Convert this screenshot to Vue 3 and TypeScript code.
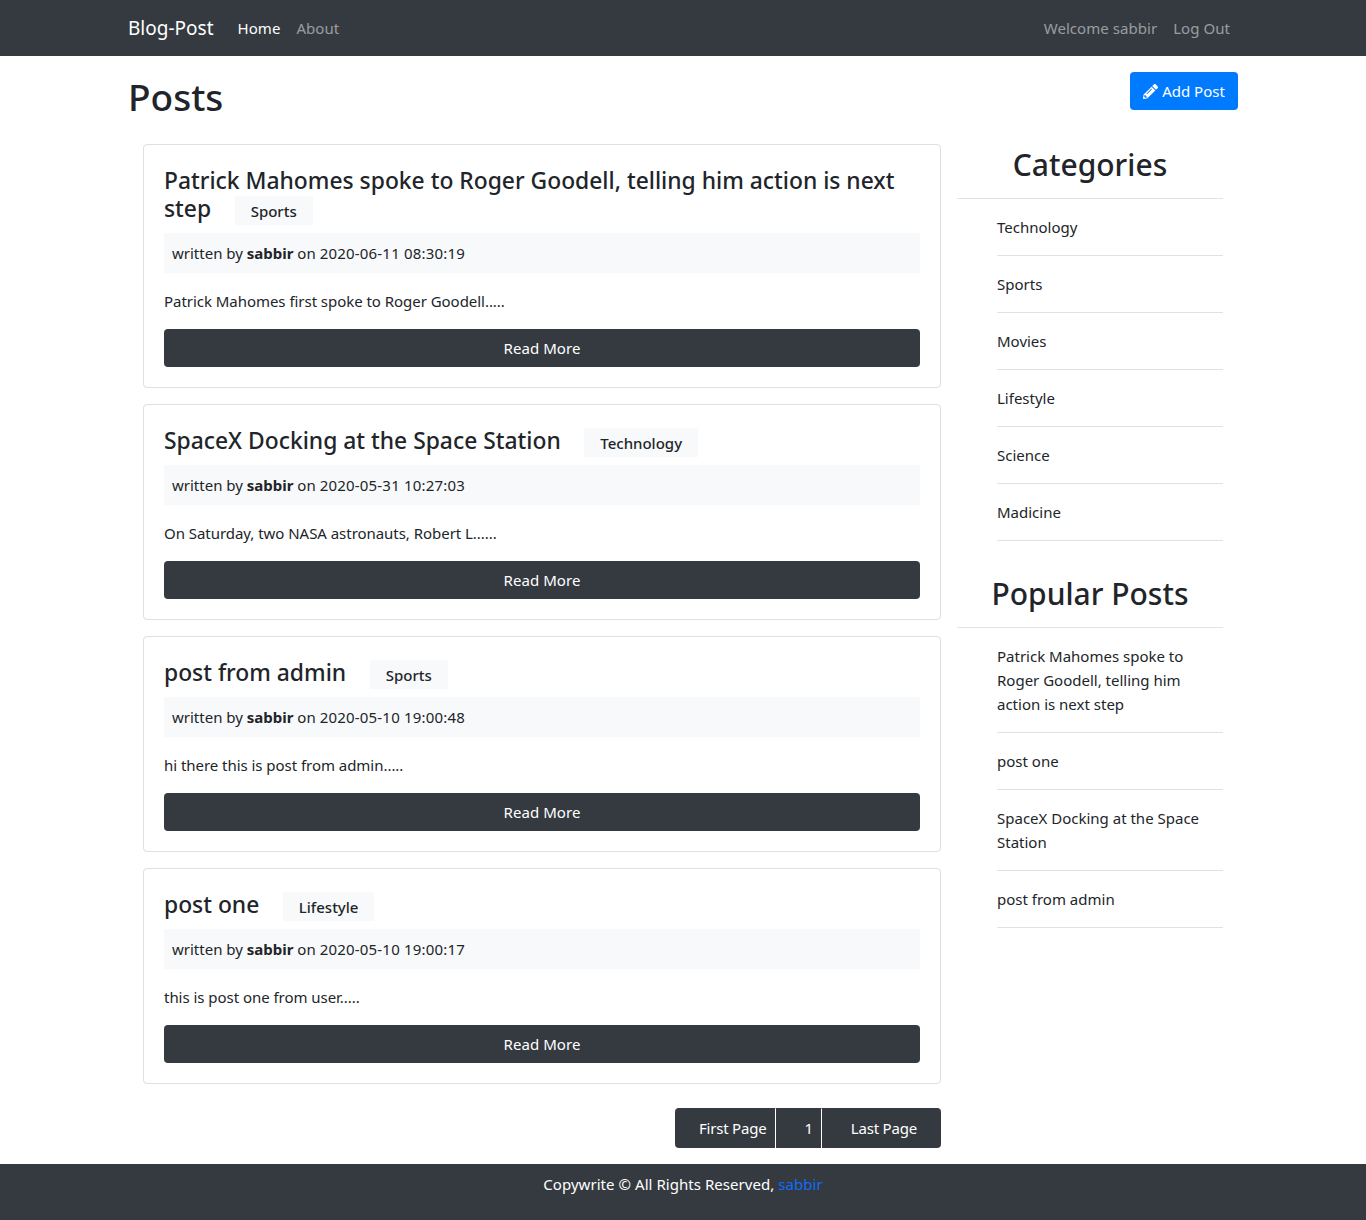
<template>
  <div class="page">
    <nav class="navbar">
      <div class="nav-inner">
        <a class="brand" href="#">Blog-Post</a>
        <a class="nav-link active" href="#">Home</a>
        <a class="nav-link" href="#">About</a>
        <span class="spacer"></span>
        <a class="nav-link" href="#">Welcome sabbir</a>
        <a class="nav-link" href="#">Log Out</a>
      </div>
    </nav>

    <div class="container">
      <div class="page-head">
        <h1>Posts</h1>
        <a class="add-btn" href="#">
          <svg class="pencil" viewBox="0 0 512 512">
            <path
              fill="currentColor"
              d="M497.9 142.1l-46.1 46.1c-4.7 4.7-12.3 4.7-17 0l-111-111c-4.7-4.7-4.7-12.3 0-17l46.1-46.1c18.7-18.7 49.1-18.7 67.9 0l60.1 60.1c18.8 18.7 18.8 49.1 0 67.9zM284.2 99.8L21.6 362.4.4 483.9c-2.9 16.4 11.4 30.6 27.8 27.8l121.5-21.3 262.6-262.6c4.7-4.7 4.7-12.3 0-17l-111-111c-4.8-4.7-12.4-4.7-17.1 0zM124.1 339.9c-5.5-5.5-5.5-14.3 0-19.8l154-154c5.5-5.5 14.3-5.5 19.8 0s5.5 14.3 0 19.8l-154 154c-5.5 5.5-14.3 5.5-19.8 0zM88 424h48v36.3l-64.5 11.3-31.1-31.1L51.7 376H88v48z"
            />
          </svg>
          Add Post
        </a>
      </div>

      <div class="content">
        <main class="posts">
          <article v-for="post in posts" :key="post.title" class="card">
            <h3 class="post-title">
              {{ post.title }}<small class="tag">{{ post.category }}</small>
            </h3>
            <div class="meta">
              written by <b>sabbir</b> on <span class="date">{{ post.date }}</span>
            </div>
            <p class="excerpt">{{ post.excerpt }}</p>
            <a class="read-more" href="#">Read More</a>
          </article>

          <div class="pagination">
            <a class="page-item first" href="#">First Page</a>
            <a class="page-item num" href="#">1</a>
            <a class="page-item last" href="#">Last Page</a>
          </div>
        </main>

        <aside class="sidebar">
          <h2 class="categories">Categories</h2>
          <hr />
          <ul>
            <li v-for="c in categories" :key="c">{{ c }}</li>
          </ul>
          <h2 class="popular">Popular Posts</h2>
          <hr />
          <ul>
            <li v-for="p in popular" :key="p">{{ p }}</li>
          </ul>
        </aside>
      </div>
    </div>

    <footer class="footer">
      Copywrite © All Rights Reserved, <a href="#">sabbir</a>
    </footer>
  </div>
</template>

<script setup lang="ts">
interface Post {
  title: string;
  category: string;
  date: string;
  excerpt: string;
}

const posts: Post[] = [
  {
    title: "Patrick Mahomes spoke to Roger Goodell, telling him action is next step",
    category: "Sports",
    date: "2020-06-11 08:30:19",
    excerpt: "Patrick Mahomes first spoke to Roger Goodell.....",
  },
  {
    title: "SpaceX Docking at the Space Station",
    category: "Technology",
    date: "2020-05-31 10:27:03",
    excerpt: "On Saturday, two NASA astronauts, Robert L......",
  },
  {
    title: "post from admin",
    category: "Sports",
    date: "2020-05-10 19:00:48",
    excerpt: "hi there this is post from admin.....",
  },
  {
    title: "post one",
    category: "Lifestyle",
    date: "2020-05-10 19:00:17",
    excerpt: "this is post one from user.....",
  },
];

const categories = ["Technology", "Sports", "Movies", "Lifestyle", "Science", "Madicine"];

const popular = [
  "Patrick Mahomes spoke to Roger Goodell, telling him action is next step",
  "post one",
  "SpaceX Docking at the Space Station",
  "post from admin",
];
</script>

<style>
body {
  margin: 0;
  background: #fff;
}
</style>

<style scoped>
.page {
  font-family: "Noto Sans", "Open Sans", sans-serif;
  font-size: 15px;
  line-height: 24px;
  color: #212529;
}

a {
  text-decoration: none;
}

.navbar {
  height: 56px;
  background: #343a40;
}

.nav-inner {
  width: 1110px;
  height: 56px;
  margin: 0 auto;
  display: flex;
  align-items: center;
}

.brand {
  font-size: 19px;
  color: #fff;
  margin-right: 16px;
}

.nav-link {
  padding: 0 8px;
  color: rgba(255, 255, 255, 0.5);
  letter-spacing: 0.05px;
}

.nav-link.active {
  color: #fff;
}

.spacer {
  flex: 1;
}

.container {
  width: 1110px;
  margin: 0 auto;
}

.page-head {
  display: flex;
  justify-content: space-between;
  align-items: flex-start;
  padding-top: 16px;
  height: 72px;
}

h1 {
  margin: 0;
  font-size: 37px;
  font-weight: 500;
  line-height: 50px;
}

.add-btn {
  display: flex;
  align-items: center;
  justify-content: center;
  gap: 4px;
  width: 108px;
  height: 38px;
  background: #007bff;
  color: #fff;
  border-radius: 4px;
}

.pencil {
  width: 15px;
  height: 15px;
}

.content {
  display: flex;
  gap: 16px;
  padding: 0 15px;
}

.posts {
  width: 798px;
}

.card {
  border: 1px solid #dfdfdf;
  border-radius: 4px;
  padding: 20px;
  margin-bottom: 16px;
}

.post-title {
  margin: 0 0 8px;
  padding-top: 2px;
  font-size: 22.85px;
  font-weight: 500;
  line-height: 28px;
}

.tag {
  display: inline-block;
  margin-left: 23.5px;
  padding: 6px 16px 4px;
  background: #f8f9fa;
  font-size: 15px;
  font-weight: 500;
  line-height: 19px;
}

.meta {
  background: #f8f9fa;
  padding: 8px;
  margin-bottom: 16px;
}

.date {
  letter-spacing: 0.2px;
}

.excerpt {
  margin: 0 0 16px;
  letter-spacing: -0.04px;
}

.read-more {
  display: block;
  height: 38px;
  line-height: 38px;
  text-align: center;
  background: #343a40;
  color: #fff;
  border-radius: 4px;
  letter-spacing: 0.05px;
}

.pagination {
  display: flex;
  justify-content: flex-end;
  margin-top: 24px;
  margin-bottom: 16px;
}

.page-item {
  height: 39px;
  line-height: 39px;
  color: #fff;
  background: #343a40;
  border-top: 1px solid #343a40;
  letter-spacing: -0.2px;
}

.first {
  padding: 0 9px 0 24px;
  border-right: 1px solid #fff;
  border-radius: 4px 0 0 4px;
}

.num {
  padding: 0 8px 0 28px;
  border-right: 1px solid #fff;
}

.last {
  padding: 0 24px 0 29px;
  border-radius: 0 4px 4px 0;
}

.sidebar {
  width: 266px;
}

.sidebar h2 {
  margin: 0 0 16px;
  font-size: 30px;
  font-weight: 500;
  line-height: 38px;
  text-align: center;
}

.sidebar h2.categories {
  padding-top: 2px;
  margin-bottom: 14px;
}

.sidebar h2.popular {
  margin: 34px 0 14px;
}

hr {
  margin: 0;
  border: 0;
  border-top: 1px solid #e3e3e3;
}

ul {
  list-style: none;
  margin: 0;
  padding: 0 0 0 40px;
}

li {
  padding: 16px 0;
  border-bottom: 1px solid #dee2e6;
}

.footer {
  height: 56px;
  box-sizing: border-box;
  padding-top: 8px;
  background: #343a40;
  color: #fff;
  text-align: center;
  letter-spacing: 0.05px;
}

.footer a {
  color: #0d6efd;
}
</style>
